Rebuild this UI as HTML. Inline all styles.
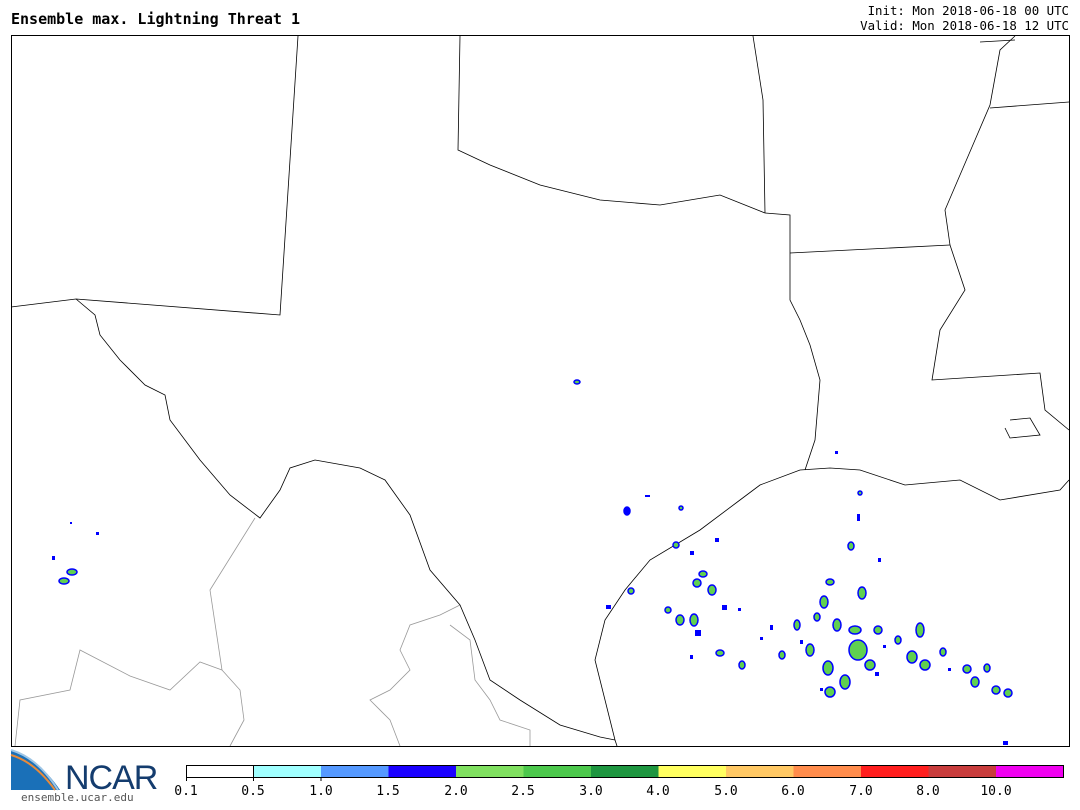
<!DOCTYPE html>
<html><head><meta charset="utf-8"><style>
body{margin:0;width:1080px;height:810px;background:#fff;position:relative;overflow:hidden;font-family:"DejaVu Sans Mono","Liberation Mono",monospace;}
.t{position:absolute;font-size:13px;color:#000;}
</style></head><body>
<div class="t" style="left:11px;top:10px;font-size:15px;font-weight:bold;">Ensemble max. Lightning Threat 1</div>
<div class="t" style="right:11px;top:3px;text-align:right;line-height:15px;font-size:12.4px;">Init: Mon 2018-06-18 00 UTC<br>Valid: Mon 2018-06-18 12 UTC</div>
<svg width="1080" height="810" style="position:absolute;left:0;top:0">
<g fill="none" stroke="#999" stroke-width="0.8">
<polyline points="255,518 210,590 222,670 200,662 170,690 130,676 80,650 70,690 20,700 15,746"/>
<polyline points="222,670 240,690 244,720 230,746"/>
<polyline points="460,605 440,615 410,625 400,650 410,670 390,690 370,700 390,720 400,746"/>
<polyline points="450,625 470,640 475,680 490,700 500,720 530,730 530,746"/>
</g>
<g fill="none" stroke="#000" stroke-width="0.8">
<polyline points="298,36 280,315 76,299 11,307"/>
<polyline points="76,299 95,315 100,335 120,360 145,385 165,395 170,420 200,460 230,495 260,518 280,490 290,468 315,460 360,468 385,480 410,515 430,570 460,605 475,640 490,680 520,700 560,725 600,737 615,740"/>
<polyline points="617,746 615,740 605,700 595,660 605,620 625,590 650,560 700,530 740,500 760,485 800,470 830,468 860,470 905,485 960,480 1000,500 1060,490 1069,480"/>
<polyline points="805,470 815,440 820,380 810,345 800,320 790,300 790,250 790,215 765,213"/>
<polyline points="765,213 720,195 660,205 600,200 540,185 490,165 458,150 460,36"/>
<polyline points="753,36 763,100 765,213"/>
<polyline points="790,253 950,245"/>
<polyline points="950,245 945,210 975,140 990,105 1000,50 1015,36"/>
<polyline points="990,108 1069,102"/>
<polyline points="980,42 1015,40"/>
<polyline points="950,245 965,290 940,330 932,380 1040,373 1045,410 1069,430"/>
<polyline points="1010,420 1030,418 1040,435 1010,438 1005,428"/>
</g>
<rect x="11.5" y="35.5" width="1058" height="711" fill="none" stroke="#000" stroke-width="1"/>
<g stroke="#0000ff" stroke-width="1.5" fill="#60d050">
<ellipse cx="577" cy="382" rx="3" ry="2"/>
<ellipse cx="627" cy="511" rx="3" ry="4" fill="#00f"/>
<ellipse cx="64" cy="581" rx="5" ry="3"/>
<ellipse cx="72" cy="572" rx="5" ry="3"/>
<ellipse cx="631" cy="591" rx="3" ry="3"/>
<ellipse cx="697" cy="583" rx="4" ry="4"/>
<ellipse cx="712" cy="590" rx="4" ry="5"/>
<ellipse cx="703" cy="574" rx="4" ry="3"/>
<ellipse cx="680" cy="620" rx="4" ry="5"/>
<ellipse cx="694" cy="620" rx="4" ry="6"/>
<ellipse cx="720" cy="653" rx="4" ry="3"/>
<ellipse cx="742" cy="665" rx="3" ry="4"/>
<ellipse cx="782" cy="655" rx="3" ry="4"/>
<ellipse cx="797" cy="625" rx="3" ry="5"/>
<ellipse cx="810" cy="650" rx="4" ry="6"/>
<ellipse cx="824" cy="602" rx="4" ry="6"/>
<ellipse cx="830" cy="582" rx="4" ry="3"/>
<ellipse cx="837" cy="625" rx="4" ry="6"/>
<ellipse cx="862" cy="593" rx="4" ry="6"/>
<ellipse cx="858" cy="650" rx="9" ry="10"/>
<ellipse cx="855" cy="630" rx="6" ry="4"/>
<ellipse cx="828" cy="668" rx="5" ry="7"/>
<ellipse cx="845" cy="682" rx="5" ry="7"/>
<ellipse cx="830" cy="692" rx="5" ry="5"/>
<ellipse cx="870" cy="665" rx="5" ry="5"/>
<ellipse cx="878" cy="630" rx="4" ry="4"/>
<ellipse cx="898" cy="640" rx="3" ry="4"/>
<ellipse cx="920" cy="630" rx="4" ry="7"/>
<ellipse cx="912" cy="657" rx="5" ry="6"/>
<ellipse cx="925" cy="665" rx="5" ry="5"/>
<ellipse cx="943" cy="652" rx="3" ry="4"/>
<ellipse cx="967" cy="669" rx="4" ry="4"/>
<ellipse cx="975" cy="682" rx="4" ry="5"/>
<ellipse cx="987" cy="668" rx="3" ry="4"/>
<ellipse cx="996" cy="690" rx="4" ry="4"/>
<ellipse cx="1008" cy="693" rx="4" ry="4"/>
<ellipse cx="851" cy="546" rx="3" ry="4"/>
<ellipse cx="860" cy="493" rx="2" ry="2"/>
<ellipse cx="681" cy="508" rx="2" ry="2"/>
<ellipse cx="676" cy="545" rx="3" ry="3"/>
<ellipse cx="668" cy="610" rx="3" ry="3"/>
<ellipse cx="817" cy="617" rx="3" ry="4"/>
</g>
<g fill="#00f">
<rect x="857" y="514" width="3" height="7"/><rect x="878" y="558" width="3" height="4"/>
<rect x="835" y="451" width="3" height="3"/><rect x="645" y="495" width="5" height="2"/>
<rect x="715" y="538" width="4" height="4"/><rect x="690" y="551" width="4" height="4"/>
<rect x="606" y="605" width="5" height="4"/><rect x="695" y="630" width="6" height="6"/>
<rect x="722" y="605" width="5" height="5"/><rect x="690" y="655" width="3" height="4"/>
<rect x="770" y="625" width="3" height="5"/><rect x="800" y="640" width="3" height="4"/>
<rect x="883" y="645" width="3" height="3"/><rect x="948" y="668" width="3" height="3"/>
<rect x="1003" y="741" width="5" height="4"/><rect x="96" y="532" width="3" height="3"/>
<rect x="52" y="556" width="3" height="4"/><rect x="70" y="522" width="2" height="2"/>
<rect x="738" y="608" width="3" height="3"/><rect x="760" y="637" width="3" height="3"/>
<rect x="875" y="672" width="4" height="4"/><rect x="820" y="688" width="3" height="3"/>
</g>
<g stroke="none">
<rect x="186" y="765" width="67.5" height="12" fill="#fff"/>
<rect x="253.5" y="765" width="67.5" height="12" fill="#a0ffff"/>
<rect x="321" y="765" width="67.5" height="12" fill="#5599ff"/>
<rect x="388.5" y="765" width="67.5" height="12" fill="#1a00ff"/>
<rect x="456" y="765" width="67.5" height="12" fill="#80e060"/>
<rect x="523.5" y="765" width="67.5" height="12" fill="#4cc84c"/>
<rect x="591" y="765" width="67.5" height="12" fill="#1e9640"/>
<rect x="658.5" y="765" width="67.5" height="12" fill="#ffff60"/>
<rect x="726" y="765" width="67.5" height="12" fill="#ffc864"/>
<rect x="793.5" y="765" width="67.5" height="12" fill="#ff8c4c"/>
<rect x="861" y="765" width="67.5" height="12" fill="#ff1e1e"/>
<rect x="928.5" y="765" width="67.5" height="12" fill="#c83c3c"/>
<rect x="996" y="765" width="68" height="12" fill="#f000f0"/>
</g>
<rect x="186.5" y="765.5" width="877" height="12" fill="none" stroke="#000" stroke-width="1"/>
<g stroke="#000" stroke-width="1">
<line x1="253.5" y1="765" x2="253.5" y2="781"/><line x1="321" y1="777" x2="321" y2="781"/>
<line x1="186.5" y1="777" x2="186.5" y2="781"/>
</g>
<g font-family="DejaVu Sans Mono,monospace" font-size="13" text-anchor="middle" fill="#000">
<text x="186" y="795">0.1</text><text x="253" y="795">0.5</text><text x="321" y="795">1.0</text>
<text x="388" y="795">1.5</text><text x="456" y="795">2.0</text><text x="523" y="795">2.5</text>
<text x="591" y="795">3.0</text><text x="658" y="795">4.0</text><text x="726" y="795">5.0</text>
<text x="793" y="795">6.0</text><text x="861" y="795">7.0</text><text x="928" y="795">8.0</text>
<text x="996" y="795">10.0</text>
</g>
<path d="M11,750 Q40,760 60,790 L11,790 Z" fill="#1a70b8"/>
<path d="M11,755 Q35,762 55,790" fill="none" stroke="#e88a3a" stroke-width="2"/>
<path d="M11,750 Q38,758 58,790" fill="none" stroke="#9fc6e6" stroke-width="2"/>
<text x="65" y="789" font-family="Liberation Sans,sans-serif" font-size="34" fill="#143c6e" letter-spacing="-1">NCAR</text>
<text x="21" y="801" font-family="DejaVu Sans Mono,monospace" font-size="11" fill="#555">ensemble.ucar.edu</text>
</svg>
</body></html>
